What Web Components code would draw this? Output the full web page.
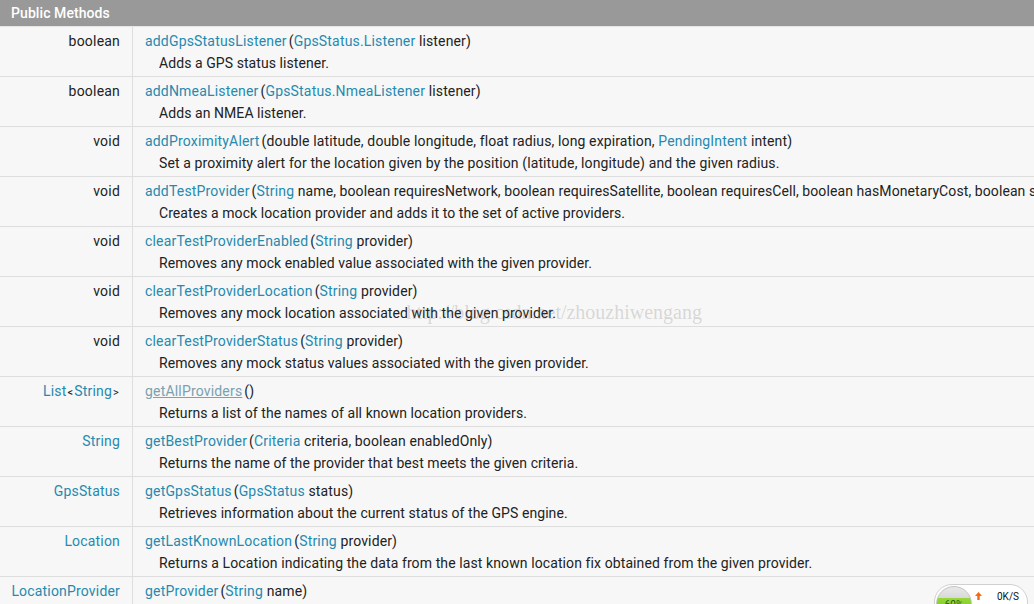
<!DOCTYPE html>
<html>
<head>
<meta charset="utf-8">
<title>Public Methods</title>
<style>
  html, body { margin: 0; height: 100%; overflow: hidden; background: #fff; }
  body { font: 14px/21px Roboto, "Liberation Sans", sans-serif; color: #222; position: relative; }
  method-row a { color: #258aaf; letter-spacing: 0.18px; }
  method-row small { font-size: 11px; color: #222; padding: 0 1px; }
</style>
</head>
<body>
<method-table>
  <method-row>
    <span slot="type">boolean</span>
    <span slot="name">addGpsStatusListener</span>
    <span slot="params">(<a>GpsStatus.Listener</a> listener)</span>
    <span slot="desc">Adds a GPS status listener.</span>
  </method-row>
  <method-row>
    <span slot="type">boolean</span>
    <span slot="name">addNmeaListener</span>
    <span slot="params">(<a>GpsStatus.NmeaListener</a> listener)</span>
    <span slot="desc">Adds an NMEA listener.</span>
  </method-row>
  <method-row style="--desc-spacing: 0.11px">
    <span slot="type">void</span>
    <span slot="name">addProximityAlert</span>
    <span slot="params">(double latitude, double longitude, float radius, long expiration, <a>PendingIntent</a> intent)</span>
    <span slot="desc">Set a proximity alert for the location given by the position (latitude, longitude) and the given radius.</span>
  </method-row>
  <method-row style="--param-spacing: 0.09px">
    <span slot="type">void</span>
    <span slot="name">addTestProvider</span>
    <span slot="params">(<a>String</a> name, boolean requiresNetwork, boolean requiresSatellite, boolean requiresCell, boolean hasMonetaryCost, boolean supportsAltitude, boolean supportsSpeed)</span>
    <span slot="desc">Creates a mock location provider and adds it to the set of active providers.</span>
  </method-row>
  <method-row>
    <span slot="type">void</span>
    <span slot="name">clearTestProviderEnabled</span>
    <span slot="params">(<a>String</a> provider)</span>
    <span slot="desc">Removes any mock enabled value associated with the given provider.</span>
  </method-row>
  <method-row>
    <span slot="type">void</span>
    <span slot="name">clearTestProviderLocation</span>
    <span slot="params">(<a>String</a> provider)</span>
    <span slot="desc">Removes any mock location associated with the given provider.</span>
  </method-row>
  <method-row>
    <span slot="type">void</span>
    <span slot="name">clearTestProviderStatus</span>
    <span slot="params">(<a>String</a> provider)</span>
    <span slot="desc">Removes any mock status values associated with the given provider.</span>
  </method-row>
  <method-row visited>
    <span slot="type"><a>List</a><small>&lt;</small><a>String</a><small>&gt;</small></span>
    <span slot="name">getAllProviders</span>
    <span slot="params">()</span>
    <span slot="desc">Returns a list of the names of all known location providers.</span>
  </method-row>
  <method-row>
    <span slot="type"><a>String</a></span>
    <span slot="name">getBestProvider</span>
    <span slot="params">(<a>Criteria</a> criteria, boolean enabledOnly)</span>
    <span slot="desc">Returns the name of the provider that best meets the given criteria.</span>
  </method-row>
  <method-row>
    <span slot="type"><a>GpsStatus</a></span>
    <span slot="name">getGpsStatus</span>
    <span slot="params">(<a>GpsStatus</a> status)</span>
    <span slot="desc">Retrieves information about the current status of the GPS engine.</span>
  </method-row>
  <method-row style="--desc-spacing: 0.1px">
    <span slot="type"><a>Location</a></span>
    <span slot="name">getLastKnownLocation</span>
    <span slot="params">(<a>String</a> provider)</span>
    <span slot="desc">Returns a Location indicating the data from the last known location fix obtained from the given provider.</span>
  </method-row>
  <method-row>
    <span slot="type"><a>LocationProvider</a></span>
    <span slot="name">getProvider</span>
    <span slot="params">(<a>String</a> name)</span>
    <span slot="desc"></span>
  </method-row>
</method-table>
<blog-watermark>http://blog.csdn.net/zhouzhiwengang</blog-watermark>
<speed-widget></speed-widget>

<script>
class MethodTable extends HTMLElement {
    connectedCallback() {
        this.attachShadow({ mode: 'open' });
        this.shadowRoot.innerHTML = `
            <style>
                :host { display: block; }
                .title {
                    background: #999;
                    color: #fff;
                    height: 26px;
                    line-height: 26px;
                    padding-left: 11px;
                    font-weight: 500;
                    letter-spacing: 0.08px;
                    border-bottom: 1px solid #e6e6e6;
                }
            </style>
            <div class="title">Public Methods</div>
            <slot></slot>
        `;
    }
}
customElements.define('method-table', MethodTable);

class MethodRow extends HTMLElement {
    connectedCallback() {
        this.attachShadow({ mode: 'open' });
        this.shadowRoot.innerHTML = `
            <style>
                :host {
                    display: flex;
                    height: 50px;
                    box-sizing: border-box;
                    background: #f7f7f7;
                    border-bottom: 1px solid #dedede;
                    white-space: nowrap;
                    overflow: hidden;
                }
                .type {
                    width: 133px;
                    flex: none;
                    box-sizing: border-box;
                    border-right: 1px solid #dedede;
                    padding: 4px 12px 0 0;
                    text-align: right;
                    letter-spacing: 0.2px;
                }
                .sig { padding: 4px 0 0 12px; min-width: 0; }
                .head { letter-spacing: var(--param-spacing, 0.13px); }
                .name { color: #258aaf; margin-right: 2px; letter-spacing: 0.18px; }
                :host([visited]) .name { color: #7aa1b0; text-decoration: underline; }
                .desc { padding: 1px 0 0 14px; letter-spacing: var(--desc-spacing, 0.07px); }
            </style>
            <div class="type"><slot name="type"></slot></div>
            <div class="sig">
                <div class="head"><span class="name"><slot name="name"></slot></span><slot name="params"></slot></div>
                <div class="desc"><slot name="desc"></slot></div>
            </div>
        `;
    }
}
customElements.define('method-row', MethodRow);

class BlogWatermark extends HTMLElement {
    connectedCallback() {
        this.attachShadow({ mode: 'open' });
        this.shadowRoot.innerHTML = `
            <style>
                :host {
                    position: absolute;
                    right: 332px;
                    top: 300px;
                    font: 20px/24px "Liberation Serif", serif;
                    color: rgba(120, 120, 120, 0.27);
                    white-space: nowrap;
                    pointer-events: none;
                }
            </style>
            <slot></slot>
        `;
    }
}
customElements.define('blog-watermark', BlogWatermark);

class SpeedWidget extends HTMLElement {
    connectedCallback() {
        this.attachShadow({ mode: 'open' });
        this.shadowRoot.innerHTML = `
            <style>
                :host {
                    position: absolute;
                    left: 934px;
                    top: 584px;
                    width: 94px;
                    height: 40px;
                    box-sizing: border-box;
                    background: #fff;
                    border: 1px solid #d0d0d0;
                    border-radius: 18px;
                    font: 10px/14px Roboto, sans-serif;
                    color: #111;
                }
                .ball {
                    position: absolute;
                    left: 1px;
                    top: 1px;
                    width: 36px;
                    height: 36px;
                    border-radius: 50%;
                    box-sizing: border-box;
                    border: 1px solid #c4c4c4;
                    background: linear-gradient(#e9e9e9, #d8d8d8 11px, #96d83a 11px, #6cb81e);
                    text-align: center;
                    padding-top: 11px;
                    color: #2d5a10;
                    overflow: hidden;
                }
                svg { position: absolute; left: 40px; top: 7px; }
                .rate { position: absolute; left: 62px; top: 5px; }
            </style>
            <div class="ball">60%</div>
            <svg width="7" height="8" viewBox="0 0 7 8"><path d="M3.5 0 7 4H4.7V8H2.3V4H0Z" fill="#f26a0f"/></svg>
            <span class="rate">0K/S</span>
        `;
    }
}
customElements.define('speed-widget', SpeedWidget);
</script>
</body>
</html>
